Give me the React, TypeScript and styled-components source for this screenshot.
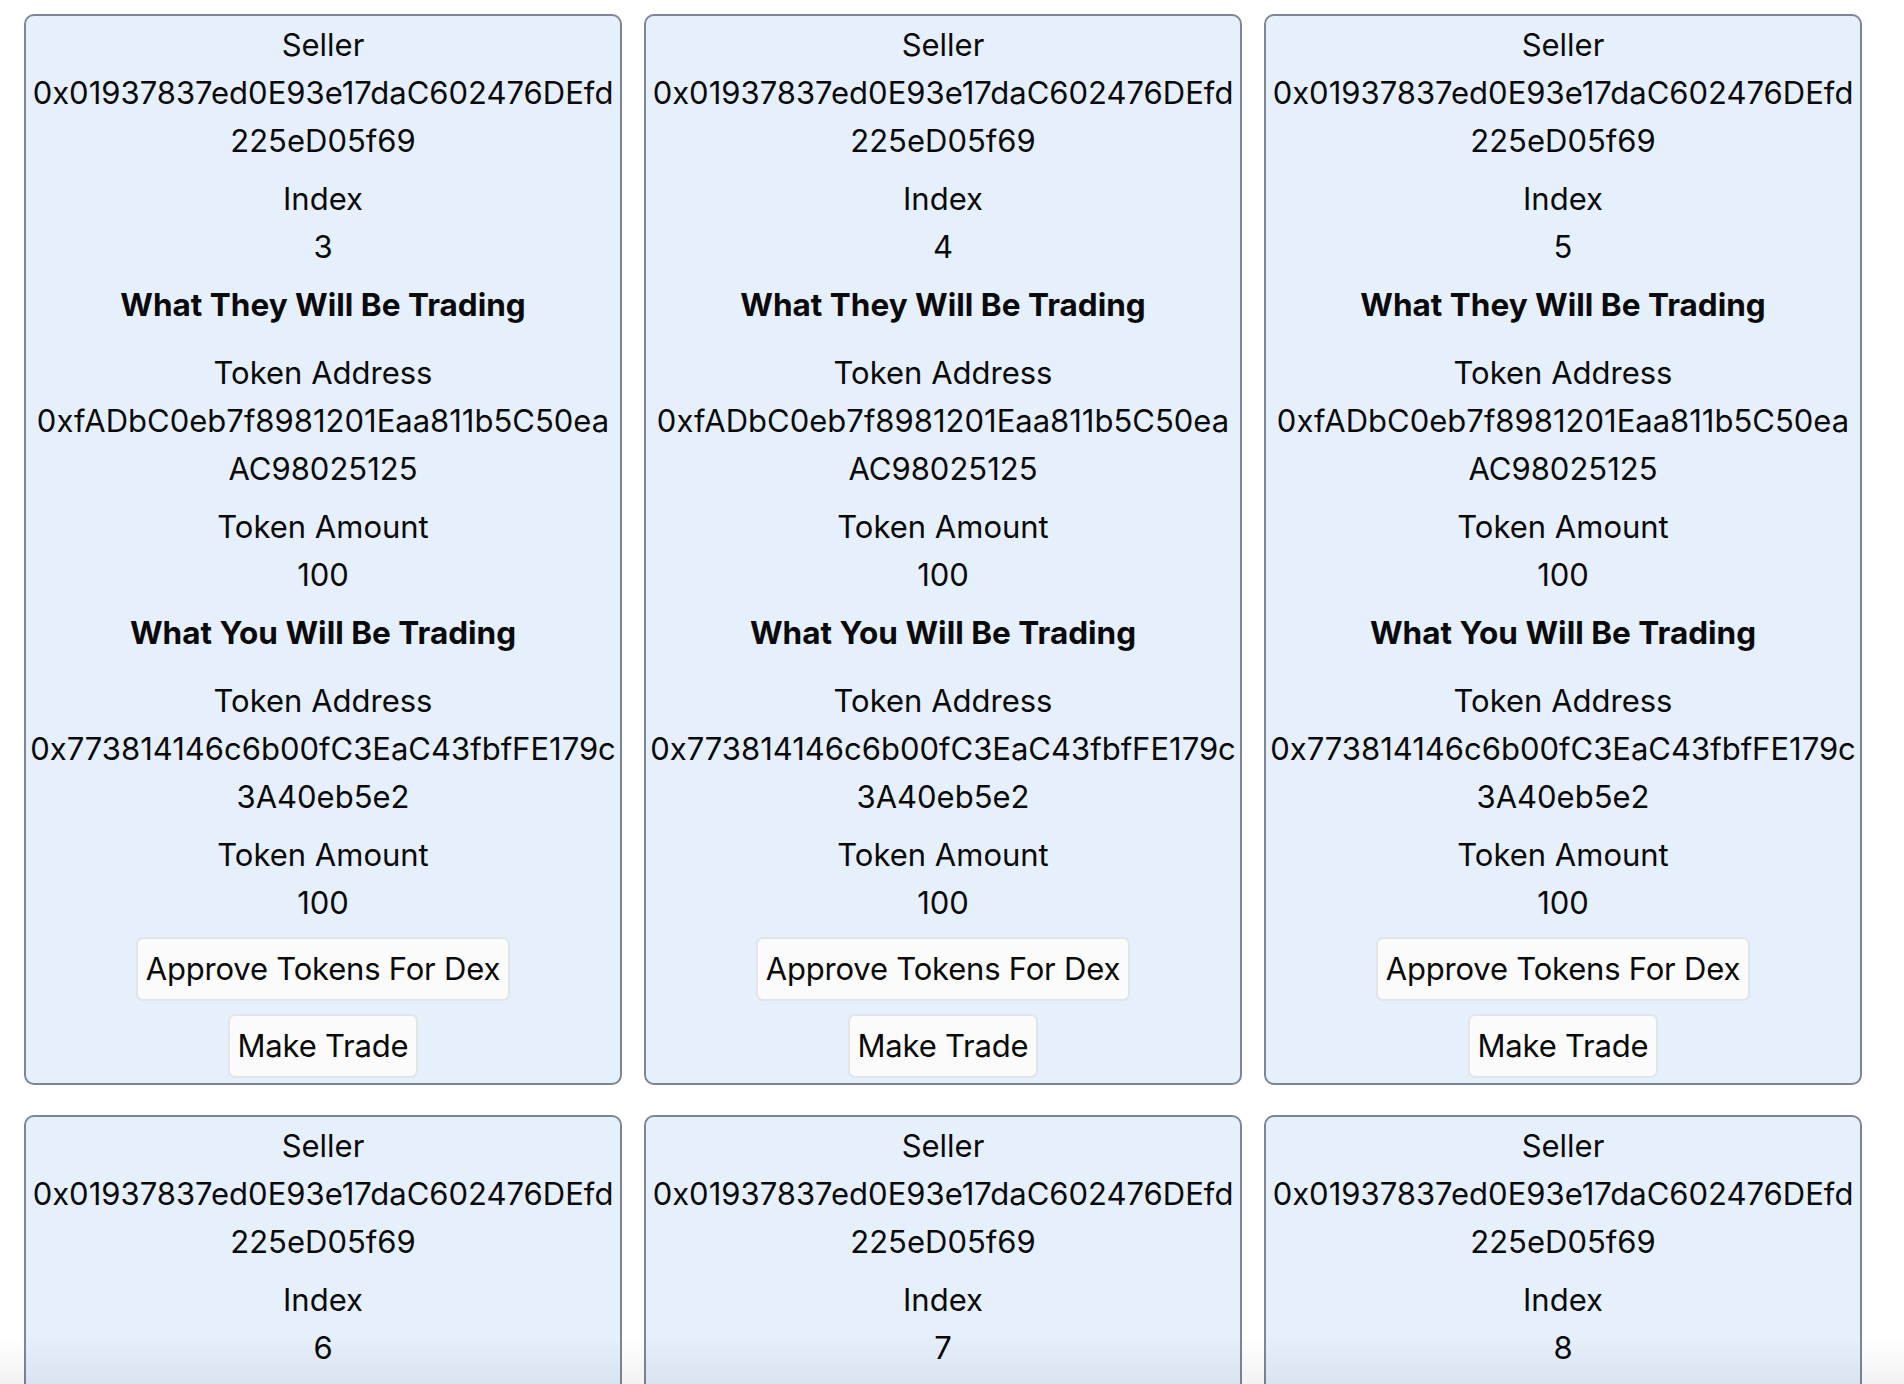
import React from "react";
import styled, { createGlobalStyle } from "styled-components";

const GlobalStyle = createGlobalStyle`
  html, body {
    margin: 0;
    padding: 0;
    background: #ffffff;
  }
  body {
    font-family: Inter, "Noto Sans", "Liberation Sans", sans-serif;
    color: #0a0a0a;
  }
`;

const Page = styled.div`
  padding: 14px 0 40px 24px;
`;

const Grid = styled.div`
  display: grid;
  grid-template-columns: repeat(3, 598px);
  column-gap: 22px;
  row-gap: 30px;
`;

const Card = styled.div`
  box-sizing: border-box;
  border: 2px solid #7e8694;
  border-radius: 10px;
  background: #e6f0fd;
  padding: 5px 3px 5px;
  display: flex;
  flex-direction: column;
  align-items: center;
  gap: 10px;
  font-size: 31px;
  line-height: 48px;
  text-align: center;
`;

const Field = styled.div`
  display: flex;
  flex-direction: column;
  align-items: center;
  width: 100%;
`;

const Label = styled.div``;

const Value = styled.div<{ $address?: boolean }>`
  width: 100%;
  word-break: ${(p) => (p.$address ? "break-all" : "normal")};
`;

const Heading = styled.div`
  font-weight: 700;
  font-size: 31.5px;
  margin-bottom: 10px;
`;

const Button = styled.button`
  font-family: inherit;
  font-size: 31px;
  line-height: 48px;
  letter-spacing: -0.2px;
  color: #0a0a0a;
  background: #fbfbfb;
  border: 2px solid #e2e4e8;
  border-radius: 7px;
  padding: 6px 8px;
  cursor: pointer;
`;

const ButtonStack = styled.div`
  display: flex;
  flex-direction: column;
  align-items: center;
  gap: 13px;
`;

const BottomFade = styled.div`
  position: fixed;
  left: 0;
  right: 0;
  bottom: 0;
  height: 48px;
  pointer-events: none;
  background: linear-gradient(to bottom, rgba(0, 0, 0, 0), rgba(0, 0, 0, 0.05));
`;

type Offer = {
  seller: string;
  index: number;
  theirToken: string;
  theirAmount: number;
  yourToken: string;
  yourAmount: number;
};

const SELLER = "0x01937837ed0E93e17daC602476DEfd225eD05f69";
const THEIR = "0xfADbC0eb7f8981201Eaa811b5C50eaAC98025125";
const YOUR = "0x773814146c6b00fC3EaC43fbfFE179c3A40eb5e2";

const offers: Offer[] = [3, 4, 5, 6, 7, 8].map((i) => ({
  seller: SELLER,
  index: i,
  theirToken: THEIR,
  theirAmount: 100,
  yourToken: YOUR,
  yourAmount: 100,
}));

function OfferCard({ offer }: { offer: Offer }) {
  return (
    <Card>
      <Field>
        <Label>Seller</Label>
        <Value $address>{offer.seller}</Value>
      </Field>
      <Field>
        <Label>Index</Label>
        <Value>{offer.index}</Value>
      </Field>
      <Heading>What They Will Be Trading</Heading>
      <Field>
        <Label>Token Address</Label>
        <Value $address>{offer.theirToken}</Value>
      </Field>
      <Field>
        <Label>Token Amount</Label>
        <Value>{offer.theirAmount}</Value>
      </Field>
      <Heading>What You Will Be Trading</Heading>
      <Field>
        <Label>Token Address</Label>
        <Value $address>{offer.yourToken}</Value>
      </Field>
      <Field>
        <Label>Token Amount</Label>
        <Value>{offer.yourAmount}</Value>
      </Field>
      <ButtonStack>
        <Button>Approve Tokens For Dex</Button>
        <Button>Make Trade</Button>
      </ButtonStack>
    </Card>
  );
}

export default function App() {
  return (
    <>
      <GlobalStyle />
      <Page>
        <Grid>
          {offers.map((o) => (
            <OfferCard key={o.index} offer={o} />
          ))}
        </Grid>
      </Page>
      <BottomFade />
    </>
  );
}
